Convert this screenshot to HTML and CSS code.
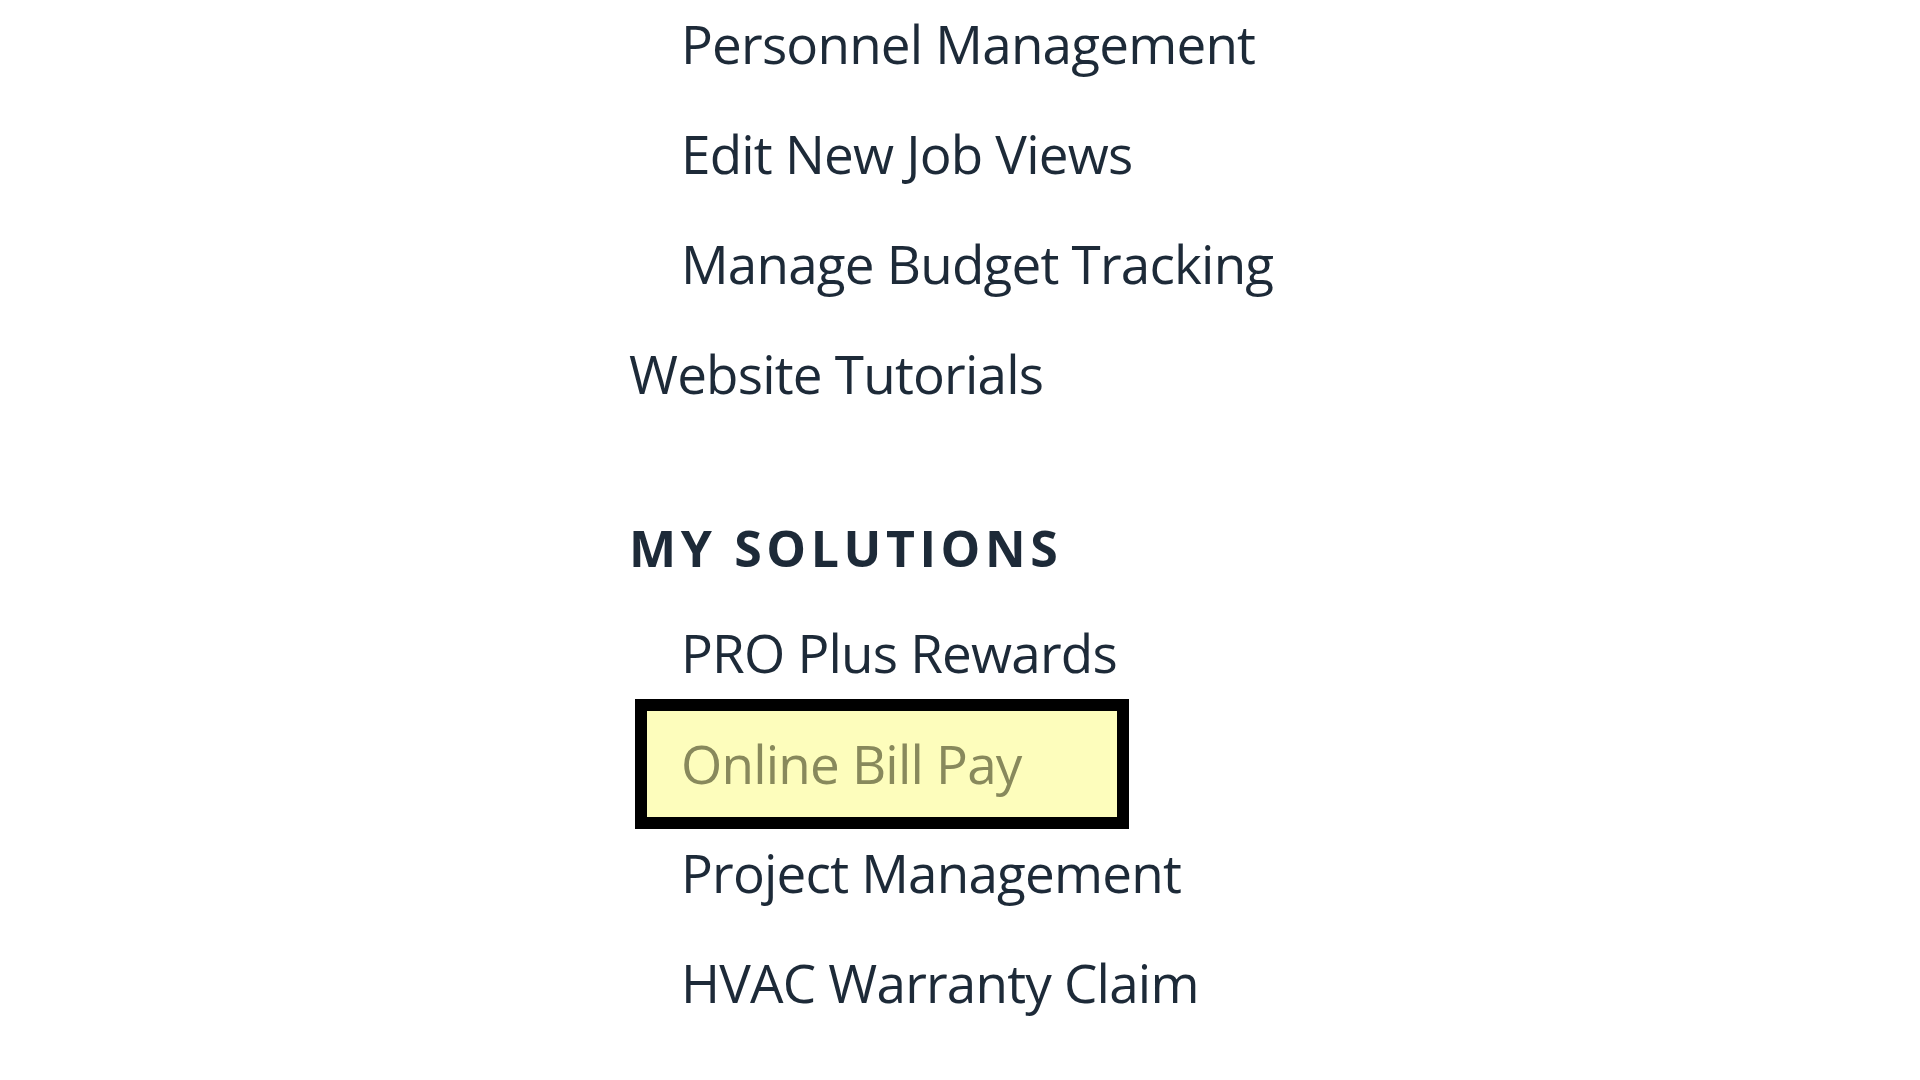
FILE: index.html
```html
<!DOCTYPE html>
<html lang="en">
<head>
<meta charset="utf-8">
<title>My Solutions</title>
<link rel="stylesheet" href="styles.css">
</head>
<body>
<nav class="menu">
  <ul class="sub">
    <li><a class="item" href="#">Personnel Management</a></li>
    <li><a class="item" href="#">Edit New Job Views</a></li>
    <li><a class="item" href="#">Manage Budget Tracking</a></li>
  </ul>
  <a class="top" href="#">Website Tutorials</a>
  <h2 class="section-title">MY SOLUTIONS</h2>
  <ul class="sub">
    <li><a class="item" href="#">PRO Plus Rewards</a></li>
    <li><a class="item highlight" href="#">Online Bill Pay</a></li>
    <li><a class="item" href="#">Project Management</a></li>
    <li><a class="item" href="#">HVAC Warranty Claim</a></li>
  </ul>
</nav>
</body>
</html>
```
FILE: styles.css
```css
html, body {
  margin: 0;
  padding: 0;
  background: #ffffff;
}
body {
  font-family: "Open Sans", "Noto Sans", "Liberation Sans", sans-serif;
  color: #1d2a38;
}
.menu {
  padding-left: 629px;
  display: flex;
  flex-direction: column;
  align-items: flex-start;
}
.sub {
  list-style: none;
  margin: 0;
  padding: 0;
  display: flex;
  flex-direction: column;
  align-items: flex-start;
}
.item, .top {
  display: block;
  font-size: 53px;
  letter-spacing: -0.8px;
  line-height: 72px;
  padding: 8px 0 30px 0;
  color: #1d2a38;
  text-decoration: none;
}
.item {
  padding-left: 52px;
}
.top {
  padding-left: 0;
}
.section-title {
  margin: 78px 0 31px 0;
  font-size: 50px;
  line-height: 60px;
  font-weight: 700;
  letter-spacing: 4.6px;
  color: #1d2a38;
}
.item.highlight {
  box-sizing: border-box;
  width: 494px;
  margin: -20px 0 0 6px;
  border: 12px solid #000000;
  padding: 17px 0 17px 34px;
  background: #fdfdbc;
  color: #88895c;
}
```
